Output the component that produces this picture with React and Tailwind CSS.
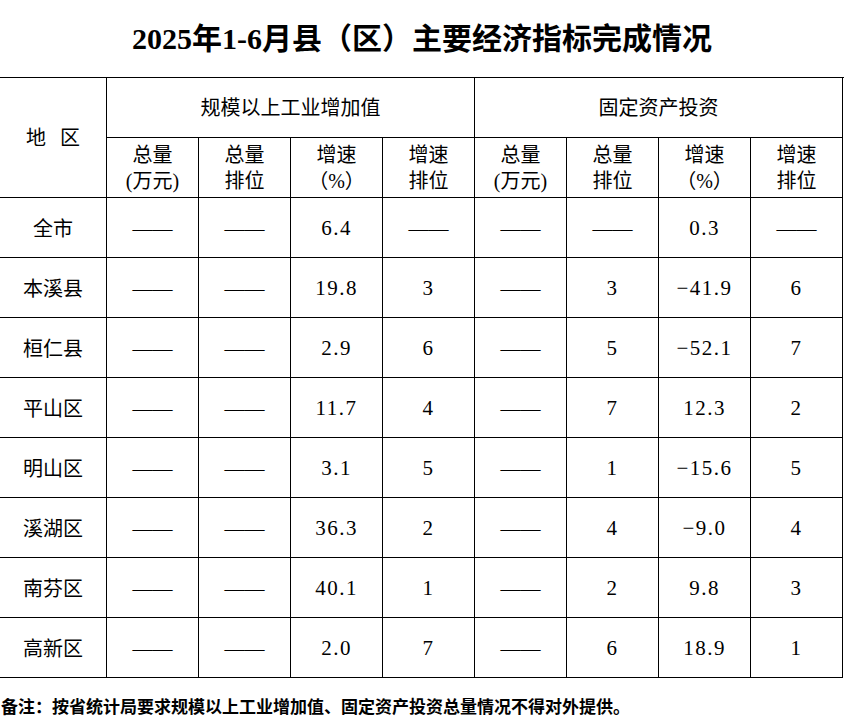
import React from "react";

const serif = "font-['Liberation_Serif','Noto_Sans_CJK_SC',serif]";
const cell = "flex items-center justify-center border-r border-b border-black";

const subHeads = [
  ["总量", "(万元)"],
  ["总量", "排位"],
  ["增速", "（%）"],
  ["增速", "排位"],
];

const D = "——";

const rows = [
  ["全市", D, D, "6.4", D, D, D, "0.3", D],
  ["本溪县", D, D, "19.8", "3", D, "3", "−41.9", "6"],
  ["桓仁县", D, D, "2.9", "6", D, "5", "−52.1", "7"],
  ["平山区", D, D, "11.7", "4", D, "7", "12.3", "2"],
  ["明山区", D, D, "3.1", "5", D, "1", "−15.6", "5"],
  ["溪湖区", D, D, "36.3", "2", D, "4", "−9.0", "4"],
  ["南芬区", D, D, "40.1", "1", D, "2", "9.8", "3"],
  ["高新区", D, D, "2.0", "7", D, "6", "18.9", "1"],
];

export default function App() {
  return (
    <div className={`w-[844px] bg-white text-black ${serif}`}>
      <div className="flex h-[77px] items-center justify-center">
        <h1 className="text-[30px] font-bold leading-none">
          2025年1-6月县（区）主要经济指标完成情况
        </h1>
      </div>

      <div className="grid grid-cols-[107px_repeat(8,92px)] grid-rows-[repeat(10,60px)] border-t border-black text-[20px]">
        <div className={`${cell} row-span-2 gap-[14px]`}>
          <span>地</span>
          <span>区</span>
        </div>
        <div className={`${cell} col-span-4`}>规模以上工业增加值</div>
        <div className={`${cell} col-span-4`}>固定资产投资</div>

        {[...subHeads, ...subHeads].map(([a, b], i) => (
          <div key={i} className={`${cell} flex-col leading-[26px]`}>
            <span>{a}</span>
            <span>{b}</span>
          </div>
        ))}

        {rows.map((r) =>
          r.map((v, j) => (
            <div key={r[0] + j} className={`${cell} pt-[2px]`}>
              {j > 0 && v !== D ? (
                <span className="text-[21px] tracking-[1.5px]">{v}</span>
              ) : (
                v
              )}
            </div>
          ))
        )}
      </div>

      <p className="mt-[17px] pl-[1px] font-['Noto_Sans_CJK_SC',sans-serif] text-[17px] font-bold leading-[22px]">
        备注：按省统计局要求规模以上工业增加值、固定资产投资总量情况不得对外提供。
      </p>
    </div>
  );
}
